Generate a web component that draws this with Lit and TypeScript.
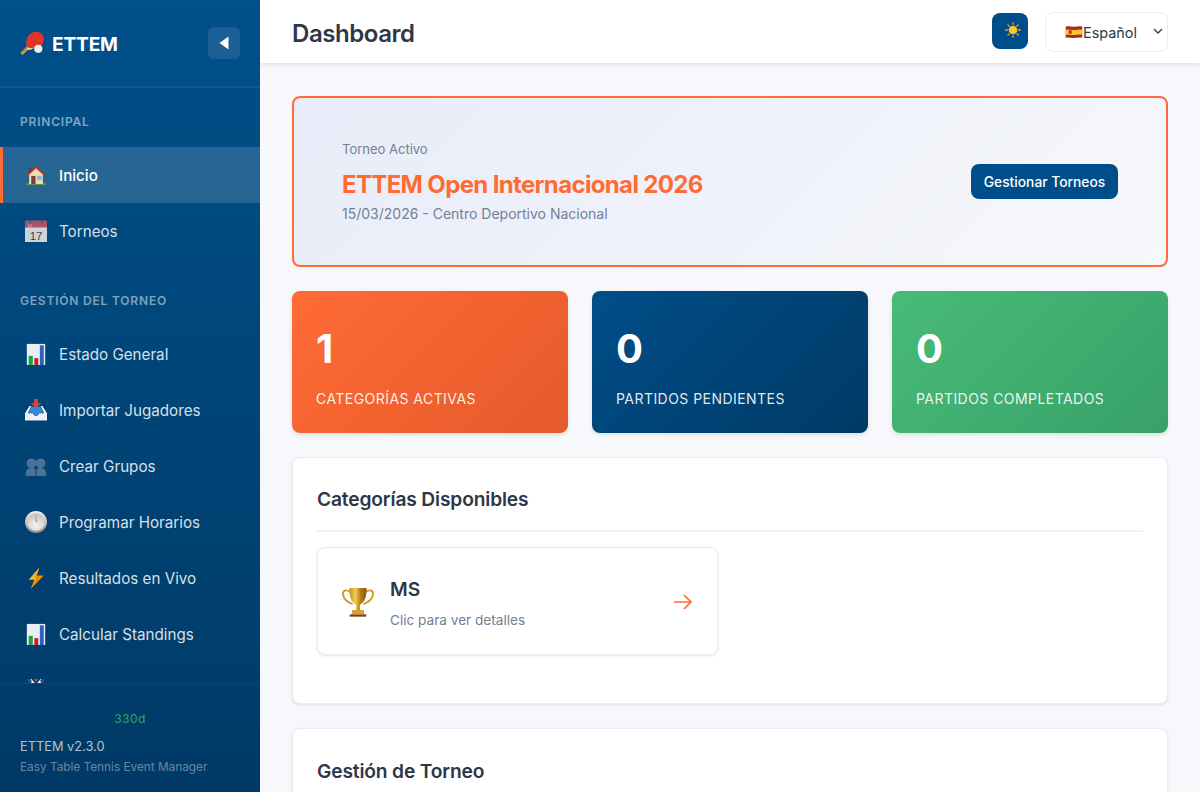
import { LitElement, html, css, svg } from "lit"
import { customElement } from "lit/decorators.js"

// emoji look-alikes, all on a 24 box
const icons: Record<string, unknown> = {
    paddle: svg`<path d="M.8 21.300l6.700-6.300 2 2-6.300 6.200c-.5.400-1.400.300-2-.3s-.8-1.300-.4-1.600z" fill="#eba63c"/><path d="M1.500 22.300l6.800-6.500" stroke="#9a611d" stroke-width=".8"/><path d="M7 16.500C4.500 10.500 7.500 1.200 16 .8c4.800-.2 8 3.200 7.800 7.700-.2 4.700-3 6.700-5.300 7.300-4 1-8.500 1.500-11.500.7z" fill="#e0332c"/><path d="M7 16.500c2.300.6 5.200.6 8 .1l-4 1.900-3.200.6z" fill="#f3d9a8"/><circle cx="18.300" cy="17.800" r="4.100" fill="#f3efe8"/><path d="M15.300 20.300a4.100 4.100 0 0 0 7-2.500 4 4 0 0 1-7 2.500z" fill="#c9c2b6"/>`,
    home: svg`<path d="M4.500 10L12 3.500 19.500 10v12h-15z" fill="#f1dcb4"/><path d="M.8 12.300L12 1.500l11.200 10.800-1.500 1.300L12 4.500 2.300 13.600z" fill="#a93a2e"/><path d="M4.500 4h3v3l-3 3z" fill="#8c2f28"/><path d="M6.800 13h4.700v9H6.800z" fill="#7a4232"/><path d="M13.300 13h5v4.700h-5z" fill="#7fb8e2"/><path d="M1 21.500c1.500-1 3-1 4 .5h14c1-1.500 2.500-1.500 4-.5v1.500H1z" fill="#5c9a3e"/>`,
    calendar: svg`<path d="M0 .5h24v7.500H0z" fill="#a95166"/><path d="M0 8h24v16H0z" fill="#cdd3d9"/><path d="M4.500 0h2v3h-2zM17.500 0h2v3h-2z" fill="#2f5f8e"/><path d="M3 4.500h2v1.500H3zM6 4.500h2v1.500H6zM3 6.800h5v.8H3z" fill="#cf8d9b"/><text x="12" y="21.500" text-anchor="middle" font-family="Liberation Sans, sans-serif" font-size="12.500" fill="#3c4249">17</text>`,
    chart: svg`<path d="M2 1h20v23H2z" fill="#eaeff5"/><path d="M4 14h4.500v10H4z" fill="#14a83a"/><path d="M10.200 16.500h4.300V24h-4.300z" fill="#c81f2b"/><path d="M16.200 2.500h4.300V24h-4.300z" fill="#2a62c4"/>`,
    inbox: svg`<path d="M9.800 0h4.400v4.500h3.300L12 10 6.500 4.500h3.300z" fill="#d9403a"/><path d="M5 7.500L0 15.500V23.500h24v-8l-5-8h-2l4 8h-5.500c-.7 1.800-2.200 2.800-3.500 2.800s-2.800-1-3.500-2.800H3l4-8z" fill="#eef2f6"/><path d="M3.500 15l3.800-6.500h9.400L20.500 15h-5c-.7 1.800-2.200 2.800-3.500 2.800S9.200 16.800 8.500 15z" fill="#3b86d8"/>`,
    people: svg`<g fill="#4d7297"><circle cx="7" cy="9" r="5.300"/><circle cx="17" cy="9" r="5.300"/><path d="M.5 23c0-6.500 3-9 6.500-9 2 0 3.500.6 4.500 2v7zM12.500 16c1-1.400 2.500-2 4.500-2 3.500 0 6.500 2.500 6.500 9h-11z"/></g>`,
    clock: svg`<defs><linearGradient id="clk" x1="0" y1="0" x2="0" y2="1"><stop offset="0" stop-color="#f2f2f2"/><stop offset="1" stop-color="#8a8d93"/></linearGradient><radialGradient id="clkf" cx=".5" cy=".7" r=".7"><stop offset="0" stop-color="#f4f2ee"/><stop offset="1" stop-color="#c6c5c3"/></radialGradient></defs><circle cx="12" cy="12" r="12" fill="url(#clk)"/><circle cx="12" cy="12" r="9.800" fill="url(#clkf)"/><path d="M11.700 4.500h.6V12h-.6zM12 12l1.700-2.800.4.300-1.700 2.800z" fill="#77787a"/>`,
    bolt: svg`<path d="M15.500 .5L4 14h6.200L6.500 23.500 20 9.500h-7.200z" fill="#f5b81e"/><path d="M15.500 .5l-2.700 9 7.200 0L6.500 23.500l6-12h-2z" fill="#e58a12"/>`,
    medal: svg`<path d="M3 0l6 10h6l6-10h-4l-5 6-5-6z" fill="#eef1f6"/><path d="M3 0l3 5 1.500-2L6 0zM16.500 2l1.500 3 3-5h-3z" fill="#24409c"/><path d="M9.500 0L12 3.500 14.500 0z" fill="#d6303a"/><circle cx="12" cy="16" r="7" fill="#e3a92c"/>`,
    sun: svg`<g stroke="#e9a626" stroke-width="1.900" stroke-linecap="round"><path d="M12 1v2.500M12 20.500V23M1 12h2.500M20.500 12H23M4.300 4.300l1.700 1.700M18 18l1.700 1.700M4.300 19.700L6 18M18 6l1.700-1.700"/></g><circle cx="12" cy="12" r="6.500" fill="#fcc52e"/>`,
    flag: svg`<path d="M1 5c4-1.400 7 .4 11 0s7-1.200 11-.4v15c-4-.8-7 0-11 .4s-7-1.400-11 0z" fill="#b5202c"/><path d="M1 9.200c4-1.200 7 .2 11 0s7-1 11-.4v6.800c-4-.6-7 .2-11 .4s-7-1.200-11 0z" fill="#f6c52a"/><rect x="5" y="9.500" width="4" height="5" fill="#a9402c"/>`,
    trophy: svg`<defs><linearGradient id="cup" x1="0" y1="0" x2="1" y2="0"><stop offset="0" stop-color="#c98f1e"/><stop offset=".35" stop-color="#f2cb5a"/><stop offset=".65" stop-color="#b47c14"/><stop offset="1" stop-color="#86560d"/></linearGradient></defs><path d="M6 4.500C3.500 2.500.5 3 .7 6c.2 3.500 3.500 6.500 7.300 7.500M18 4.500c2.500-2 5.500-1.500 5.300 1.500-.2 3.500-3.500 6.500-7.300 7.500" fill="none" stroke="#cf9a2a" stroke-width="1.400"/><path d="M5.500 1.500h13c0 7-1.500 10.500-5 12.500v4h-3v-4C7 12 5.500 8.500 5.500 1.500z" fill="url(#cup)"/><path d="M7.500 18h9v3.300h-9z" fill="#d9a332"/><path d="M5.800 21.300h12.400V23H5.800z" fill="#8a3c12"/>`,
}

const icon = (name: string, size = 24) =>
    html`<svg class="ico" viewBox="0 0 24 24" width=${size} height=${size}>${icons[name]}</svg>`

const mainNav = [
    { icon: "home", label: "Inicio", active: true },
    { icon: "calendar", label: "Torneos" },
]

// the last row only shows the tip of its icon above the footer
const torneoNav = [
    { icon: "chart", label: "Estado General" },
    { icon: "inbox", label: "Importar Jugadores" },
    { icon: "people", label: "Crear Grupos" },
    { icon: "clock", label: "Programar Horarios" },
    { icon: "bolt", label: "Resultados en Vivo" },
    { icon: "chart", label: "Calcular Standings" },
    { icon: "medal", label: "" },
]

const stats = [
    { value: "1", label: "Categorías Activas", cls: "orange" },
    { value: "0", label: "Partidos Pendientes", cls: "blue" },
    { value: "0", label: "Partidos Completados", cls: "green" },
]

@customElement("app-root")
export class AppRoot extends LitElement {
    static styles = css`
        :host {
            display: flex;
            width: 1200px;
            height: 792px;
            overflow: hidden;
            font-family: Inter, "Liberation Sans", sans-serif;
            background: #f7f8fc;
            color: #2d3748;
        }
        .ico {
            display: block;
            flex: none;
        }

        /* Sidebar */
        .sidebar {
            width: 260px;
            flex: none;
            display: flex;
            flex-direction: column;
            background: linear-gradient(180deg, #00508a 0%, #003a66 100%);
            color: #fff;
        }
        .brand {
            height: 88px;
            flex: none;
            box-sizing: border-box;
            padding: 0 20px;
            display: flex;
            align-items: center;
            justify-content: space-between;
            border-bottom: 2px solid rgba(255, 255, 255, 0.05);
        }
        .logo {
            display: flex;
            align-items: center;
            gap: 8px;
            font-size: 19.2px;
            font-weight: 700;
            letter-spacing: -0.2px;
        }
        .logo span {
            margin-top: 2px;
        }
        .collapse {
            width: 32px;
            height: 32px;
            border-radius: 6px;
            background: rgba(255, 255, 255, 0.1);
            display: flex;
            align-items: center;
            justify-content: center;
        }
        .nav {
            flex: 1;
            min-height: 0;
            overflow: hidden;
        }
        .section {
            padding-top: 26px;
        }
        .section + .section {
            padding-top: 34px;
        }
        .section-title {
            padding: 0 20px;
            height: 16px;
            margin-bottom: 17px;
            font-size: 12px;
            line-height: 16px;
            font-weight: 600;
            letter-spacing: 0.8px;
            text-transform: uppercase;
            color: rgba(255, 255, 255, 0.5);
        }
        .item {
            height: 56px;
            box-sizing: border-box;
            padding-left: 22px;
            display: flex;
            align-items: center;
            gap: 12px;
            font-size: 15.2px;
            color: rgba(255, 255, 255, 0.85);
            border-left: 3px solid transparent;
        }
        .item.active {
            background: rgba(255, 255, 255, 0.15);
            border-left-color: #ff6b35;
            color: #fff;
            font-weight: 500;
        }
        .foot {
            flex: none;
            height: 109px;
            box-sizing: border-box;
            border-top: 1px solid rgba(255, 255, 255, 0.05);
            padding: 27px 20px 0;
        }
        .uptime {
            text-align: center;
            font-size: 12px;
            line-height: 16px;
            color: #38a169;
            letter-spacing: 0.5px;
        }
        .version {
            margin-top: 12px;
            font-size: 12.8px;
            line-height: 16px;
            color: rgba(255, 255, 255, 0.7);
        }
        .tagline {
            margin-top: 4px;
            font-size: 11.8px;
            line-height: 16px;
            color: rgba(255, 255, 255, 0.4);
        }

        /* Main */
        .main {
            flex: 1;
            min-width: 0;
            display: flex;
            flex-direction: column;
        }
        .topbar {
            height: 63px;
            flex: none;
            box-sizing: border-box;
            padding: 1px 32px 0;
            display: flex;
            align-items: center;
            justify-content: space-between;
            background: #fff;
            box-shadow: 0 2px 4px rgba(0, 0, 0, 0.08);
            position: relative;
        }
        h1 {
            margin: 2px 0 0;
            font-size: 24px;
            font-weight: 600;
            letter-spacing: -0.44px;
            color: #2d3748;
        }
        .tools {
            display: flex;
            align-items: center;
            gap: 17px;
        }
        .theme {
            width: 36px;
            height: 36px;
            margin-top: -2px;
            box-sizing: border-box;
            padding: 0 0 2px 6px;
            border-radius: 8px;
            background: #004e89;
            display: flex;
            align-items: center;
            justify-content: center;
        }
        .lang {
            width: 123px;
            height: 40px;
            box-sizing: border-box;
            border: 1px solid #e8ecf4;
            border-radius: 8px;
            background: #fff;
            display: flex;
            align-items: center;
            padding-left: 19px;
            font-size: 14.4px;
            color: #2d3748;
            position: relative;
        }
        .chev {
            position: absolute;
            right: 4px;
            top: 15px;
        }
        .content {
            flex: 1;
            min-height: 0;
            overflow: hidden;
            padding: 33px 32px 0;
            display: flex;
            flex-direction: column;
            gap: 24px;
        }
        .banner {
            flex: none;
            height: 171px;
            box-sizing: border-box;
            padding: 0 48px;
            border: 2px solid #ff6b35;
            border-radius: 8px;
            background: linear-gradient(135deg, #e8ecf8 0%, #f7f8fc 100%);
            display: flex;
            align-items: center;
            justify-content: space-between;
        }
        .banner-label {
            font-size: 13px;
            line-height: 16px;
            color: #718096;
        }
        .banner-title {
            margin-top: 12px;
            font-size: 24px;
            line-height: 32px;
            font-weight: 700;
            letter-spacing: -0.65px;
            color: #ff6b35;
        }
        .banner-sub {
            margin-top: 4px;
            font-size: 14px;
            line-height: 18px;
            color: #718096;
        }
        .btn {
            width: 147px;
            height: 35px;
            display: flex;
            align-items: center;
            justify-content: center;
            border-radius: 8px;
            background: #004e89;
            color: #fff;
            font-size: 13.8px;
            font-weight: 500;
        }
        .stats {
            flex: none;
            display: grid;
            grid-template-columns: repeat(3, 1fr);
            gap: 24px;
        }
        .stat {
            height: 142px;
            box-sizing: border-box;
            padding: 34px 24px 0;
            border-radius: 8px;
            color: #fff;
            box-shadow: 0 2px 4px rgba(0, 0, 0, 0.1);
        }
        .stat.orange {
            background: linear-gradient(135deg, #ff6b35 0%, #e55a2b 100%);
        }
        .stat.blue {
            background: linear-gradient(135deg, #004e89 0%, #003a66 100%);
        }
        .stat.green {
            background: linear-gradient(135deg, #48bb78 0%, #38a169 100%);
        }
        .stat-value {
            font-size: 40px;
            line-height: 48px;
            font-weight: 700;
        }
        .stat-label {
            margin-top: 18px;
            font-size: 14px;
            line-height: 16px;
            letter-spacing: 0.45px;
            text-transform: uppercase;
            color: rgba(255, 255, 255, 0.9);
        }
        .panel {
            flex: none;
            box-sizing: border-box;
            padding: 24px;
            background: #fff;
            border: 1px solid #e8ecf4;
            border-radius: 8px;
            box-shadow: 0 1px 3px rgba(0, 0, 0, 0.1);
        }
        .panel.cats {
            height: 247px;
        }
        h2 {
            margin: 0;
            font-size: 19.2px;
            line-height: 36px;
            font-weight: 600;
            letter-spacing: -0.15px;
            color: #2d3748;
        }
        .cats h2 {
            line-height: 34px;
            padding-bottom: 14px;
            border-bottom: 2px solid #f0f2f7;
            margin-bottom: 15px;
        }
        .cat {
            width: 401px;
            height: 108px;
            box-sizing: border-box;
            padding: 2px 24px 0;
            display: flex;
            align-items: center;
            gap: 16px;
            background: #fff;
            border: 1px solid #e8ecf4;
            border-radius: 8px;
            box-shadow: 0 1px 3px rgba(0, 0, 0, 0.1);
        }
        .cat-text {
            flex: 1;
        }
        .cat-name {
            font-size: 19.2px;
            line-height: 28px;
            font-weight: 600;
        }
        .cat-hint {
            margin-top: 8px;
            font-size: 13.6px;
            line-height: 18px;
            color: #718096;
        }
    `

    renderItem(it: { icon: string; label: string; active?: boolean }) {
        return html`<div class="item ${it.active ? "active" : ""}">${icon(it.icon, 22)}<span>${it.label}</span></div>`
    }

    render() {
        return html`
            <aside class="sidebar">
                <div class="brand">
                    <div class="logo">${icon("paddle", 24)}<span>ETTEM</span></div>
                    <div class="collapse">
                        <svg width="10" height="14" viewBox="0 0 10 14"><path d="M9.500 .5v13L.5 7z" fill="#fff"/></svg>
                    </div>
                </div>
                <nav class="nav">
                    <div class="section">
                        <div class="section-title">Principal</div>
                        ${mainNav.map((it) => this.renderItem(it))}
                    </div>
                    <div class="section">
                        <div class="section-title">Gestión del Torneo</div>
                        ${torneoNav.map((it) => this.renderItem(it))}
                    </div>
                </nav>
                <div class="foot">
                    <div class="uptime">330d</div>
                    <div class="version">ETTEM v2.3.0</div>
                    <div class="tagline">Easy Table Tennis Event Manager</div>
                </div>
            </aside>
            <div class="main">
                <header class="topbar">
                    <h1>Dashboard</h1>
                    <div class="tools">
                        <div class="theme">${icon("sun", 16)}</div>
                        <div class="lang">
                            ${icon("flag", 18)}<span>Español</span>
                            <svg class="chev" width="10" height="7" viewBox="0 0 10 7"><path d="M1 1l4 4 4-4" fill="none" stroke="#2d3748" stroke-width="1.300"/></svg>
                        </div>
                    </div>
                </header>
                <div class="content">
                    <section class="banner">
                        <div>
                            <div class="banner-label">Torneo Activo</div>
                            <div class="banner-title">ETTEM Open Internacional 2026</div>
                            <div class="banner-sub">15/03/2026 - Centro Deportivo Nacional</div>
                        </div>
                        <div class="btn">Gestionar Torneos</div>
                    </section>
                    <section class="stats">
                        ${stats.map(
                            (s) => html`<div class="stat ${s.cls}">
                                <div class="stat-value">${s.value}</div>
                                <div class="stat-label">${s.label}</div>
                            </div>`
                        )}
                    </section>
                    <section class="panel cats">
                        <h2>Categorías Disponibles</h2>
                        <div class="cat">
                            ${icon("trophy", 32)}
                            <div class="cat-text">
                                <div class="cat-name">MS</div>
                                <div class="cat-hint">Clic para ver detalles</div>
                            </div>
                            <svg width="20" height="16" viewBox="0 0 20 16"><path d="M1 8h17M11 1l7 7-7 7" fill="none" stroke="#ff6b35" stroke-width="1.700"/></svg>
                        </div>
                    </section>
                    <section class="panel">
                        <h2>Gestión de Torneo</h2>
                    </section>
                </div>
            </div>
        `
    }
}
